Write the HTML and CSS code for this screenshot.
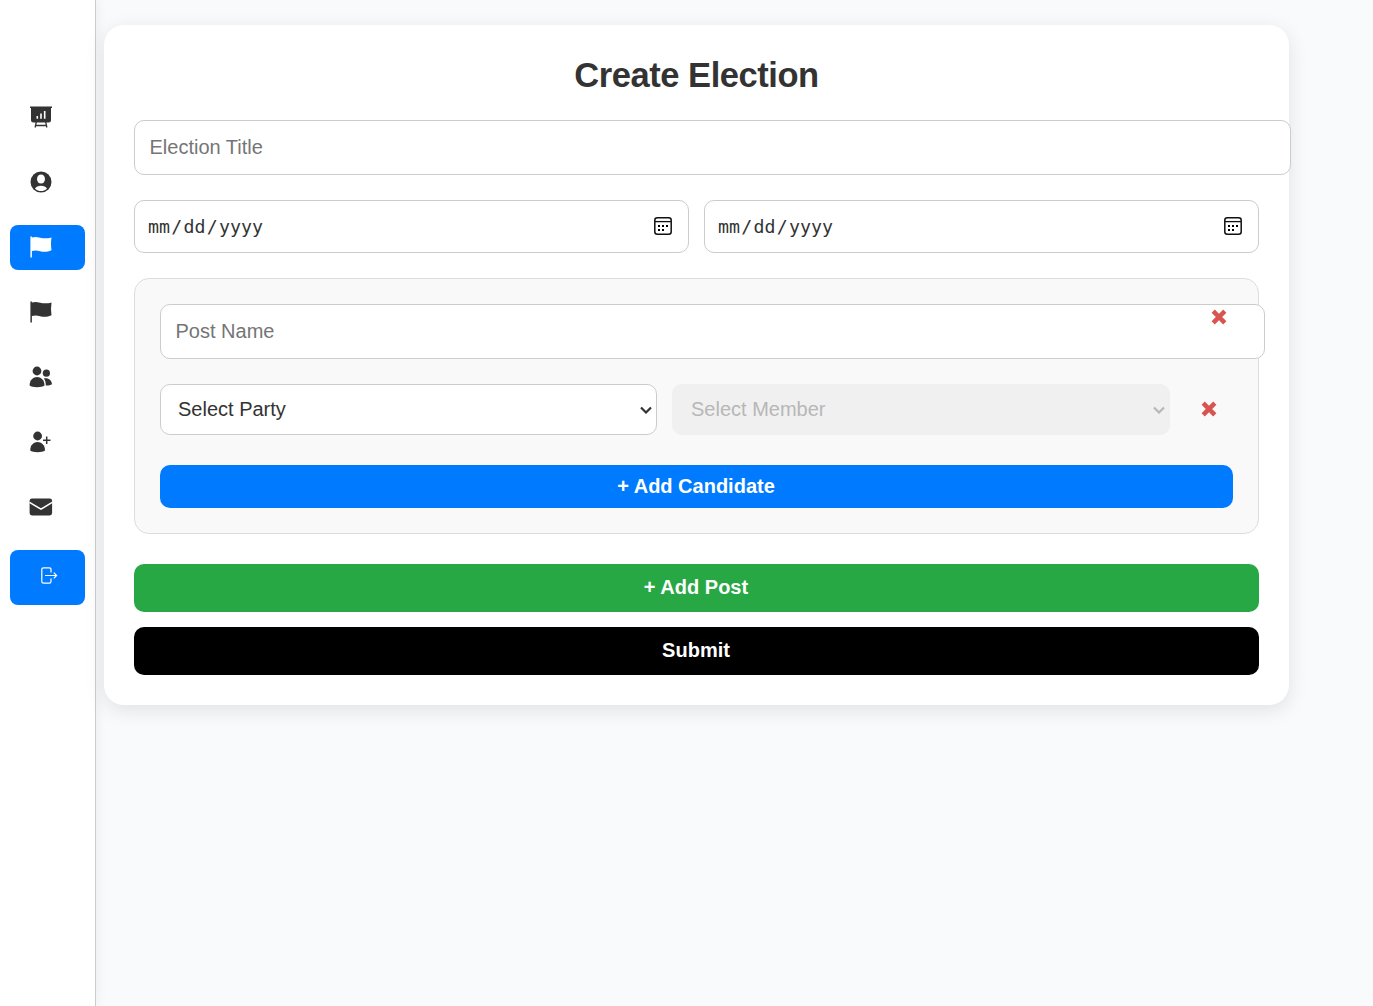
FILE: index.html
```html
<!DOCTYPE html>
<html lang="en">
<head>
<meta charset="UTF-8">
<title>Create Election</title>
<link rel="stylesheet" href="styles.css">
</head>
<body>
<div class="layout">
  <nav class="sidebar">
    <a class="nav-item"><svg viewBox="0 0 22 22"><path d="M0 .4h22v1.500h-1v12.200q0 2.500-2.500 2.500h-15Q1 16.600 1 14.100V1.900H0z"/><path d="M6.300 16 5.100 21.500M15.700 16l1.200 5.500M5.500 19.500h11" fill="none" stroke="currentColor" stroke-width="1.300"/><path d="M7.300 12.800V10M11 12.800V7.500M14.700 12.800V5" fill="none" stroke="#fff" stroke-width="1.600" /></svg></a>
    <a class="nav-item"><svg viewBox="0 0 22 22"><circle cx="11" cy="11" r="10.500"/><ellipse cx="11" cy="8" rx="4" ry="4.500" fill="#fff"/><path d="M5 17.700C6.500 13.700 15.500 13.700 17 17.700 13.500 20.800 8.500 20.800 5 17.700z" fill="#fff"/></svg></a>
    <a class="nav-item active"><svg viewBox="0 0 22 22"><path d="M.4.600h1.500v1C8-.6 12 4.200 21.500 1.500q-1 6.500 0 12.800C12 18.500 9 12.500 1.900 15.100v6.300H.4z"/></svg></a>
    <a class="nav-item"><svg viewBox="0 0 22 22"><path d="M.4.600h1.500v1C8-.6 12 4.200 21.500 1.500q-1 6.500 0 12.800C12 18.500 9 12.500 1.900 15.100v6.300H.4z"/></svg></a>
    <a class="nav-item"><svg viewBox="0 0 22 22"><circle cx="7" cy="5" r="4.400"/><path d="M-.4 19.500C-.4 8 14.500 8 14.500 19.500 12 21.700 2 21.700-.4 19.500z"/><circle cx="16.400" cy="7.200" r="3.600"/><path d="M14.700 12.200c4-.5 7 2 7.300 6-1.500 1-4 1.300-6.200 1.200 0-3-.3-5-2-7z"/></svg></a>
    <a class="nav-item"><svg viewBox="0 0 22 22"><circle cx="7.600" cy="5" r="4.400"/><path d="M.2 19.500C.2 8 15 8 15 19.500 12.500 21.700 2.700 21.700.2 19.500z"/><path d="M13 9.300h7.500M16.700 5.500V13" fill="none" stroke="currentColor" stroke-width="1.500"/></svg></a>
    <a class="nav-item"><svg viewBox="0 0 22 22"><rect x="-.4" y="2.500" width="22.500" height="17" rx="2.400"/><path d="M-.5 6.300 11 13.200 22.200 6.300" fill="none" stroke="#fff" stroke-width="1.500"/></svg></a>
    <a class="nav-item logout"><svg viewBox="0 0 17 17"><path d="M10 5.500v-3Q10 .8 8.300.8H2.500Q.8.800.8 2.500v12q0 1.700 1.700 1.700h5.800q1.700 0 1.700-1.700v-3M4 8.500h11.500M12.800 5.700l2.800 2.800-2.800 2.800" fill="none" stroke="currentColor" stroke-width="1.200"/></svg></a>
  </nav>
  <main class="card">
    <h1 class="title">Create Election</h1>
    <input class="text-input" type="text" placeholder="Election Title">
    <div class="row dates">
      <div class="date-input"><span>mm</span><i>/</i><span>dd</span><i>/</i><span>yyyy</span>
        <svg class="calendar" viewBox="0 0 18 18"><rect x=".8" y=".8" width="16.400" height="16.400" rx="2.500" fill="none" stroke="#111" stroke-width="1.500"/><path d="M1 4.600h16" stroke="#111" stroke-width="1.300"/><path d="M4 8h2v2H4zM8 8h2v2H8zM12 8h2v2h-2zM4 12h2v2H4zM8 12h2v2H8z"/></svg></div>
      <div class="date-input"><span>mm</span><i>/</i><span>dd</span><i>/</i><span>yyyy</span>
        <svg class="calendar" viewBox="0 0 18 18"><rect x=".8" y=".8" width="16.400" height="16.400" rx="2.500" fill="none" stroke="#111" stroke-width="1.500"/><path d="M1 4.600h16" stroke="#111" stroke-width="1.300"/><path d="M4 8h2v2H4zM8 8h2v2H8zM12 8h2v2h-2zM4 12h2v2H4zM8 12h2v2H8z"/></svg></div>
    </div>
    <section class="post">
      <button class="remove remove-post"><svg viewBox="0 0 16 16"><path d="m2.200 2.200 11.600 11.600M13.800 2.200 2.200 13.800"/></svg></button>
      <input class="text-input" type="text" placeholder="Post Name">
      <div class="row candidate">
        <div class="select">Select Party<svg class="chevron" viewBox="0 0 12 8"><path d="m1 1.500 5 5 5-5"/></svg></div>
        <div class="select disabled">Select Member<svg class="chevron" viewBox="0 0 12 8"><path d="m1 1.500 5 5 5-5"/></svg></div>
        <button class="remove"><svg viewBox="0 0 16 16"><path d="m2.200 2.200 11.600 11.600M13.800 2.200 2.200 13.800"/></svg></button>
      </div>
      <button class="btn add-candidate">+ Add Candidate</button>
    </section>
    <button class="btn add-post">+ Add Post</button>
    <button class="btn submit">Submit</button>
  </main>
</div>
</body>
</html>
```
FILE: styles.css
```css
* { box-sizing: border-box; }
body {
  margin: 0;
  background: #f8fafc;
  color: #333;
  font-family: "Liberation Sans", Arial, sans-serif;
  font-size: 20px;
}
.layout { display: flex; align-items: flex-start; min-height: 1006px; }
.sidebar {
  width: 96px;
  height: 1006px;
  flex: none;
  padding: 95px 10px 0;
  background: #fff;
  border-right: 1px solid #ccc;
  box-shadow: 2px 0 10px rgba(0, 0, 0, .05);
  display: flex;
  flex-direction: column;
  gap: 20px;
}
.nav-item {
  display: flex;
  width: 75px;
  height: 45px;
  padding: 11px 0 0 19.600px;
  border-radius: 8px;
  color: #333;
}
.nav-item svg { width: 22px; height: 22px; fill: currentColor; overflow: visible; }
.active, .logout { background: #007bff; color: #fff; }
.logout { height: 55px; padding: 16.500px 0 0 31px; }
.logout svg { width: 17px; height: 17px; }
.card {
  width: 1185px;
  height: 680px;
  margin: 25px 0 0 8px;
  padding: 30px;
  background: #fff;
  border-radius: 20px;
  box-shadow: 0 5px 20px rgba(0, 0, 0, .1);
}
.title { margin: 0 0 25px; font-size: 34.500px; line-height: 40px; letter-spacing: -.45px; text-align: center; }
.text-input {
  display: block;
  width: calc(100% + 32px);
  height: 55px;
  margin: 0 0 25px;
  padding: 0 15px 0 14.500px;
  border: 1px solid #ccc;
  border-radius: 10px;
  background: #fff;
  font: inherit;
}
.text-input::placeholder { color: #757575; }
.row { display: flex; gap: 15px; }
.date-input {
  display: flex;
  align-items: center;
  flex: 1;
  height: 53px;
  padding: 0 16px 1px 13px;
  border: 1px solid #ccc;
  border-radius: 10px;
  font: 18.270px "DejaVu Sans Mono", monospace;
}
.date-input i { width: 13.500px; text-align: center; font-style: normal; }
.calendar { width: 18px; height: 18px; margin-left: auto; }
.post {
  position: relative;
  height: 256px;
  margin: 25px 0 30px;
  padding: 25px;
  border: 1px solid #ddd;
  border-radius: 15px;
  background: #f9f9f9;
}
.candidate { align-items: center; margin-bottom: 30px; }
.select {
  display: flex;
  align-items: center;
  justify-content: space-between;
  flex: 1;
  height: 51px;
  padding: 0 4px 1px 17px;
  border: 1px solid #ccc;
  border-radius: 10px;
  background: #fff;
}
.disabled { border-color: #f0f0f0; background: #f0f0f0; color: #b7b7b7; padding-left: 18px; }
.chevron { width: 12px; height: 8px; margin-top: 1px; fill: none; stroke: currentColor; stroke-width: 2.200; }
.remove {
  display: flex;
  width: 48px;
  height: 30px;
  padding: 6px 0 0 15.500px;
  border: 0;
  background: none;
}
.remove svg { width: 16px; height: 16px; stroke: #d9534f; stroke-width: 4.500; }
.remove-post { position: absolute; top: 24px; right: 15px; }
.btn {
  display: block;
  width: 100%;
  height: 48px;
  padding: 0 1px 2px 0;
  border: 0;
  border-radius: 10px;
  color: #fff;
  font: bold 20px "Liberation Sans", Arial, sans-serif;
}
.add-candidate { height: 43px; padding-bottom: 0; background: #007bff; }
.add-post { margin-bottom: 15px; background: #28a745; }
.submit { background: #000; }
```
